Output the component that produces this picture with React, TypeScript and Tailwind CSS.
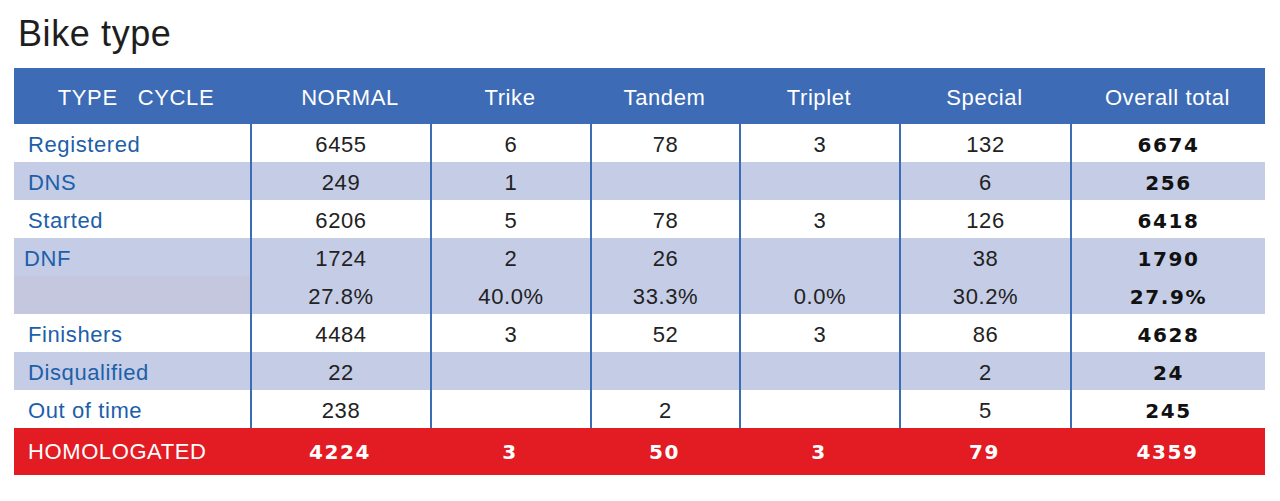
const COLS = "grid grid-cols-[236px_180px_160px_149px_160px_171px_195px]";

type Row = {
  label: string;
  values: string[];
  total: string;
  shaded?: boolean;
  labelBg?: string;
  indent?: string;
};

const ROWS: Row[] = [
  { label: "Registered", values: ["6455", "6", "78", "3", "132"], total: "6674" },
  { label: "DNS", values: ["249", "1", "", "", "6"], total: "256", shaded: true },
  { label: "Started", values: ["6206", "5", "78", "3", "126"], total: "6418" },
  { label: "DNF", values: ["1724", "2", "26", "", "38"], total: "1790", shaded: true, indent: "pl-[10px]" },
  { label: "", values: ["27.8%", "40.0%", "33.3%", "0.0%", "30.2%"], total: "27.9%", shaded: true, labelBg: "bg-[#c4c7de]" },
  { label: "Finishers", values: ["4484", "3", "52", "3", "86"], total: "4628" },
  { label: "Disqualified", values: ["22", "", "", "", "2"], total: "24", shaded: true },
  { label: "Out of time", values: ["238", "", "2", "", "5"], total: "245" },
];

const HEADERS = ["NORMAL", "Trike", "Tandem", "Triplet", "Special", "Overall total"];
const HOMOLOGATED = ["4224", "3", "50", "3", "79", "4359"];

const sans = "font-['Liberation_Sans',Arial,sans-serif]";
const heavy = "font-['DejaVu_Sans',sans-serif] font-bold tracking-[1.6px] text-[20px]";

export default function App() {
  return (
    <div className={`min-h-[501px] w-[1280px] bg-white ${sans}`}>
      <h1 className="pl-[18px] pt-[14px] text-[36px] leading-[40px] tracking-[0.6px] text-[#1e1e1e]">
        Bike type
      </h1>

      <div className="ml-[14px] mt-[14px] w-[1251px] text-[22px] tracking-[0.6px]">
        {/* Header */}
        <div className={`${COLS} h-[56px] items-center bg-[#3d6bb5] pt-[2px] text-white`}>
          <div className="text-center whitespace-pre pl-[8px]">{"TYPE   CYCLE"}</div>
          {HEADERS.map((h, i) => (
            <div key={h} className={`text-center ${i === 0 ? "pl-[20px]" : ""}`}>
              {h}
            </div>
          ))}
        </div>

        {/* Body */}
        {ROWS.map((row, idx) => (
          <div
            key={idx}
            className={`${COLS} h-[38px] items-stretch ${row.shaded ? "bg-[#c5cce6]" : "bg-white"}`}
          >
            <div
              className={`flex items-center pt-[3px] text-[#1d5fa9] ${row.labelBg ?? ""} ${row.indent ?? "pl-[14px]"}`}
            >
              {row.label}
            </div>
            {row.values.map((v, i) => (
              <div
                key={i}
                className="flex items-center justify-center border-l-2 border-[#3a6db3] pt-[3px] text-[#222]"
              >
                {v}
              </div>
            ))}
            <div className={`flex items-center justify-center border-l-2 border-[#3a6db3] pt-[3px] text-[#111] ${heavy}`}>
              {row.total}
            </div>
          </div>
        ))}

        {/* Homologated */}
        <div className={`${COLS} h-[47px] items-center bg-[#e31b23] text-white`}>
          <div className="pl-[14px]">HOMOLOGATED</div>
          {HOMOLOGATED.map((v, i) => (
            <div key={i} className={`text-center ${heavy}`}>
              {v}
            </div>
          ))}
        </div>
      </div>
    </div>
  );
}
